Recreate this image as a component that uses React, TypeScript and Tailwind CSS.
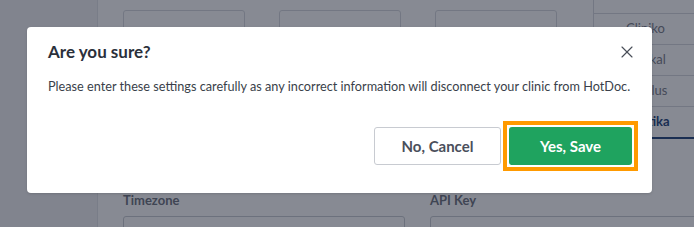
import { X } from 'lucide-react'

const tabs = [
  { label: 'Cliniko', active: false },
  { label: 'Nookal', active: false },
  { label: 'Corplus', active: false },
  { label: 'Praktika', active: true },
]

function Background() {
  return (
    <div className="flex h-[227px] w-[694px] overflow-hidden bg-white">
      <div className="h-full w-[98px] shrink-0 border-r border-[#e2e4e8] bg-[#f2f3f4]" />
      <div className="flex flex-1 items-start gap-[35px] pl-[25px] pt-[10px]">
        <div className="flex w-[435px] shrink-0 flex-col">
          <div className="flex shrink-0 gap-[34px]">
            <div className="h-[60px] w-[122px] shrink-0 rounded-[3px] border border-[#d6d9de]" />
            <div className="h-[60px] w-[122px] shrink-0 rounded-[3px] border border-[#d6d9de]" />
            <div className="h-[60px] w-[122px] shrink-0 rounded-[3px] border border-[#d6d9de]" />
          </div>
          <div className="mt-[121px] flex shrink-0 gap-[25px]">
            <div className="flex w-[282px] shrink-0 flex-col">
              <span className="text-[13px] font-bold leading-[18px] text-[#6f747e]">Timezone</span>
              <div className="mt-[7px] h-[30px] shrink-0 rounded-[3px] border border-[#c9ccd2] px-[10px] pt-[6px] text-[13px] text-[#333]">
                Australia/Melbourne
              </div>
            </div>
            <div className="flex w-[300px] shrink-0 flex-col">
              <span className="text-[13px] font-bold leading-[18px] text-[#6f747e]">API Key</span>
              <div className="mt-[7px] h-[30px] shrink-0 rounded-[3px] border border-[#c9ccd2] px-[10px] pt-[6px] text-[13px] text-[#333]">
                a1b2c3d4e5f6a7b8c9d0e1f2a3b4c5d6
              </div>
            </div>
          </div>
        </div>
        <div className="-mt-[10px] flex w-[104px] shrink-0 flex-col border-l border-[#d6d9de]">
          <div className="h-[14px] border-b border-[#d6d9de]" />
          {tabs.map(({ label, active }) => (
            <div
              key={label}
              className={
                active
                  ? 'flex h-[32px] items-center justify-center border-b-2 border-[#25467c] text-[13px] font-bold text-[#25467c]'
                  : 'flex h-[31px] items-center justify-center border-b border-[#d6d9de] text-[13px] text-[#7b808a]'
              }
            >
              {label}
            </div>
          ))}
        </div>
      </div>
    </div>
  )
}

export default function App() {
  return (
    <div className="relative h-[227px] w-[694px] overflow-hidden font-['Lato',sans-serif]">
      <Background />
      <div className="absolute inset-0 bg-[rgba(15,21,39,0.5)]" />
      <div className="absolute left-[27px] top-[27px] flex w-[625px] flex-col rounded-[4px] bg-white px-[21px] pb-[22px] pt-[13px] shadow-sm">
        <div className="flex items-center justify-between">
          <h2 className="text-[17px] font-bold leading-[24px] text-[#2b303b]">Are you sure?</h2>
          <button type="button" className="-mr-[6px] text-[#4a4f59]">
            <X className="h-5 w-5" strokeWidth={1.4} />
          </button>
        </div>
        <p className="mt-[12px] whitespace-nowrap text-[12.7px] leading-[20px] text-[#3a3f4a]">
          Please enter these settings carefully as any incorrect information will disconnect your clinic from HotDoc.
        </p>
        <div className="mt-[25px] flex items-center justify-end gap-[2px] -mr-[7px]">
          <button
            type="button"
            className="h-[38px] w-[127px] rounded-[3px] border border-[#c8cbd1] bg-white text-[15px] font-bold text-[#4a4f5b]"
          >
            No, Cancel
          </button>
          <div className="border-4 border-[#ff9a00] bg-white p-[2px]">
            <button
              type="button"
              className="block h-[38px] w-[123px] rounded-[3px] bg-[#1fa35f] text-[15px] font-bold text-white"
            >
              Yes, Save
            </button>
          </div>
        </div>
      </div>
    </div>
  )
}
